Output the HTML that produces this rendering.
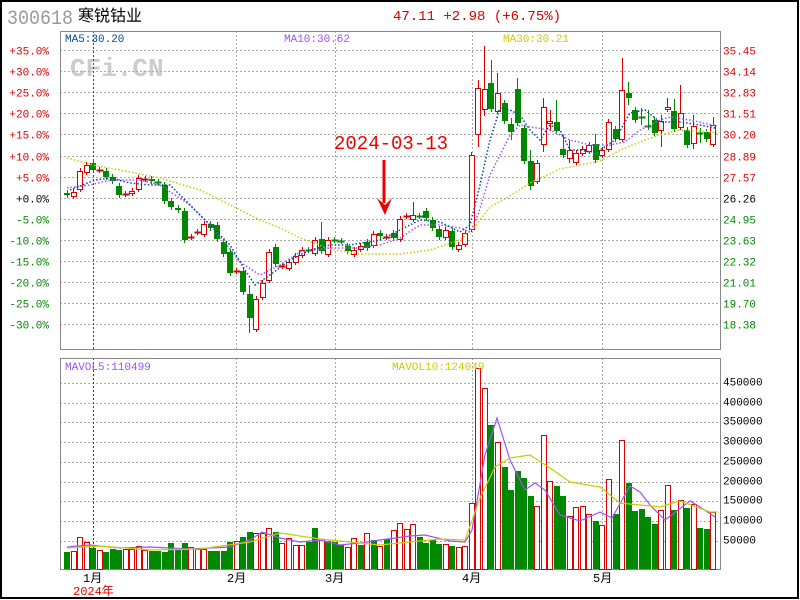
<!DOCTYPE html>
<html><head><meta charset="utf-8"><style>
html,body{margin:0;padding:0;background:#fff}
body{width:800px;height:600px;overflow:hidden}
svg{display:block}
text{font-family:"Liberation Mono","Noto Sans CJK SC",monospace}
</style></head><body>
<svg id="s" width="800" height="600" xmlns="http://www.w3.org/2000/svg">
<rect x="1" y="1" width="797" height="597" fill="#fff" stroke="#000" stroke-width="2"/>
<text x="7" y="24" font-family="Liberation Sans,sans-serif" font-size="20" textLength="66" lengthAdjust="spacingAndGlyphs" fill="#999">300618</text>
<text x="78" y="21" font-family="Liberation Sans,Noto Sans CJK SC,sans-serif" font-size="16" fill="#000">寒锐钴业</text>
<text x="393" y="20" font-size="14" fill="#d00">47.11 +2.98 (+6.75%)</text>
<text x="70" y="76" font-family="Liberation Sans,sans-serif" font-weight="bold" font-size="26" fill="#ccc">CFi.CN</text>
<g id="g"></g>
<text x="65" y="42" font-size="11" fill="#004c99">MA5:30.20</text>
<text x="284" y="42" font-size="11" fill="#a050ff">MA10:30.62</text>
<text x="503" y="42" font-size="11" fill="#cccc00">MA30:30.21</text>
<text x="65" y="370" font-size="11" fill="#a050ff">MAVOL5:110499</text>
<text x="392" y="370" font-size="11" fill="#cccc00">MAVOL10:124049</text>
<text x="334" y="149" font-family="Liberation Serif,serif" font-size="19" fill="#e00">2024-03-13</text>
<path d="M384 160V203" stroke="#e00" stroke-width="3"/>
<path d="M377 198L385 215L392 198L385 205Z" fill="#e00"/>
<g font-size="12" fill="#000" font-family="Liberation Sans,Noto Sans CJK SC,sans-serif">
<text x="83" y="582">1月</text><text x="227" y="582">2月</text><text x="325" y="582">3月</text><text x="462" y="582">4月</text><text x="593" y="582">5月</text>
<text x="73" y="595" fill="#e00">2024年</text>
</g>
</svg>
<script>
var g=document.getElementById('g'),h='';
function L(x1,y1,x2,y2,c,d,w){h+='<line x1="'+x1+'" y1="'+y1+'" x2="'+x2+'" y2="'+y2+'" stroke="'+c+'" stroke-width="'+(w||1)+'"'+(d?' stroke-dasharray="'+d+'"':'')+'/>';}
function T(x,y,s,c,a){h+='<text x="'+x+'" y="'+y+'" font-size="11" fill="'+c+'"'+(a?' text-anchor="end"':'')+'>'+s+'</text>';}
var pl=['+35.0%','+30.0%','+25.0%','+20.0%','+15.0%','+10.0%','+5.0%','+0.0%','-5.0%','-10.0%','-15.0%','-20.0%','-25.0%','-30.0%'];
var pr=['35.45','34.14','32.83','31.51','30.20','28.89','27.57','26.26','24.95','23.63','22.32','21.01','19.70','18.38'];
for(var k=0;k<14;k++){var y=Math.round(50+21.1*k)+.5;L(60,y,720,y,'#aaa','2,2');var c=k<7?'#d00':(k==7?'#000':'#080');T(49,y+4,pl[k],c,1);T(723,y+4,pr[k],c);}
for(var k=0;k<9;k++){var y=Math.round(383+19.7*k)+.5;L(60,y,720,y,'#aaa','2,2');T(723,y+2,(450000-50000*k)+'',"#000");}
[236,335,472,602].forEach(function(x){L(x+.5,31,x+.5,349,'#aaa','2,2');L(x+.5,358,x+.5,569,'#aaa','2,2');});
L(93.5,31,93.5,349,'#d00','2,2');L(93.5,358,93.5,569,'#d00','2,2');
h+='<rect x="60.5" y="31.5" width="660" height="318" fill="none" stroke="#888"/><rect x="60.5" y="358.5" width="660" height="211" fill="none" stroke="#888"/>';
var C=[['g',193,195],['r',192,196],['r',171,189],['r',165,172],['g',163,170],['r',170,170],['g',171,177],['g',177,181],['g',186,195],['r',194,194],['r',191,193],['r',178,189],['r',179,179],['g',179,181],['g',182,182],['g',185,201],['g',201,207],['g',208,210],['g',211,240],['r',237,237],['r',232,232],['r',224,234],['g',224,228],['g',225,239],['g',242,254],['g',252,273],['r',271,271],['g',271,292],['g',294,318,285,333],['r',299,329],['r',283,297],['r',252,280],['g',247,264],['r',266,266],['r',262,268],['r',256,262],['r',250,255],['g',250,250],['r',240,253],['g',239,251,222],['r',240,254],['g',240,240],['g',241,241],['g',246,251],['r',250,254],['r',246,249],['g',242,248],['r',234,245],['g',233,236],['r',237,237],['g',233,238],['r',219,239],['r',216,216],['r',215,219,202],['g',216,216],['g',211,218],['g',220,228],['g',229,237],['r',230,237],['g',231,247],['r',245,249],['r',233,244],['r',155,229],['r',88,134,80,147],['r',89,109,46,116],['g',83,109,60],['r',93,111,73],['g',103,121],['g',124,132,118,140],['g',89,123,78],['g',128,161],['g',161,186,150,190],['r',163,181],['r',107,144,98,152],['r',121,123,110,131],['g',122,131,100],['g',149,155,135],['r',150,158,140,163],['r',153,162],['r',149,153],['r',145,151],['g',144,160,134],['r',150,155],['r',122,149],['g',129,139],['r',90,139,58],['g',93,98,82,105],['g',110,120],['g',117,117,108,125],['g',126,126,110,130],['g',120,133],['r',121,130,115,147],['r',107,109,98],['g',111,129,99],['r',113,127,85],['g',130,145],['r',126,143,115,149],['g',133,133,128,143],['g',132,139],['r',125,144,117]];
var V=[552,551,537,542,548,550,552,549,550,549,549,546,550,551,551,552,543,549,543,547,549,549,551,551,551,542,541,537,532,533,533,528,532,543,538,545,545,542,528,539,541,542,545,547,538,545,533,540,546,539,530,523,529,524,537,543,540,544,544,546,547,546,503,368,388,425,442,467,490,471,478,496,506,435,481,486,496,516,507,506,514,521,525,479,514,440,483,511,509,517,524,510,485,510,500,508,504,528,529,512];
var VC='grrrgrgggrrrrgggggg rrrggggrggrrrgrrrrggrgggrrgrgrgrrrrggggrgrrrrrgrgggggrrrgg rrrrgrrgrggggg rrgrgrggr'.replace(/ /g,'');
var sp=6.53;
C.forEach(function(d,i){var x=64+sp*i,cx=Math.round(x+2.5)+.5,col=d[0]=='r'?'#d00':'#080';var hi=d[3]||d[1]-3,lo=d[4]||d[2]+3;
L(cx,hi,cx,lo,col);
if(d[2]-d[1]<2){L(Math.round(x)-0.5,d[1]+.5,Math.round(x)+6.5,d[1]+.5,col,0,2);}
else if(d[0]=='r')h+='<rect x="'+(Math.round(x)+.5)+'" y="'+(d[1]+.5)+'" width="5" height="'+(d[2]-d[1])+'" fill="#fff" stroke="#d00"/>';
else h+='<rect x="'+Math.round(x)+'" y="'+d[1]+'" width="6" height="'+(d[2]-d[1])+'" fill="#080"/>';});
V.forEach(function(t,i){var x=Math.round(64+sp*i),col=VC.charAt(i)||'g';
if(col=='r')h+='<rect x="'+(x+.5)+'" y="'+(t+.5)+'" width="5" height="'+(569-t)+'" fill="#fff" stroke="#d00"/>';
else h+='<rect x="'+x+'" y="'+t+'" width="6" height="'+(569-t)+'" fill="#080"/>';});
function P(a,c,d){h+='<polyline points="'+a+'" fill="none" stroke="'+c+'" stroke-width="'+(d?1.5:1.2)+'"'+(d?' stroke-dasharray="1.5,2"':'')+'/>';}
P('67,158 93,165 130,172 160,178 200,190 230,205 260,220 280,228 300,238 330,249 360,254 400,254 430,250 460,240 475,226 490,207 510,196 530,183 560,169 600,161 620,150 640,142 660,135 680,130 700,131 717,133','#cccc00',1);
P('67,188 90,185 110,180 140,180 160,185 190,205 215,230 240,262 260,275 280,265 300,252 330,248 360,248 380,245 400,238 420,225 440,225 460,228 470,232 478,215 490,175 510,135 520,125 530,127 550,130 570,140 590,145 610,145 625,142 640,130 660,120 670,117 690,120 717,126','#a050ff',1);
P('70,190 95,180 110,178 130,183 150,185 170,185 185,200 210,225 230,245 245,270 255,285 270,275 290,260 310,250 330,245 350,245 380,240 400,230 420,220 440,222 460,232 470,225 480,185 490,140 500,108 510,110 520,115 530,130 540,140 550,125 560,130 570,150 580,150 590,152 600,150 615,140 630,113 645,110 660,122 680,122 700,125 715,128','#004c99',1);
P('67,547 90,545 120,548 150,547 190,549 230,547 250,540 262,532 280,538 300,542 320,540 340,545 360,543 380,540 410,536 425,535 450,541 465,542 472,530 485,455 497,418 510,460 525,490 535,483 545,490 560,515 580,521 600,512 612,518 630,486 640,492 650,505 665,520 690,501 700,507 715,517','#a050ff');
P('67,548 100,546 150,550 200,549 250,542 280,533 320,539 380,545 440,539 465,540 480,498 495,467 510,458 530,455 550,468 570,482 600,487 620,503 640,505 660,507 680,501 710,512 717,512','#cccc00');
g.innerHTML=h;
</script>
</body></html>
